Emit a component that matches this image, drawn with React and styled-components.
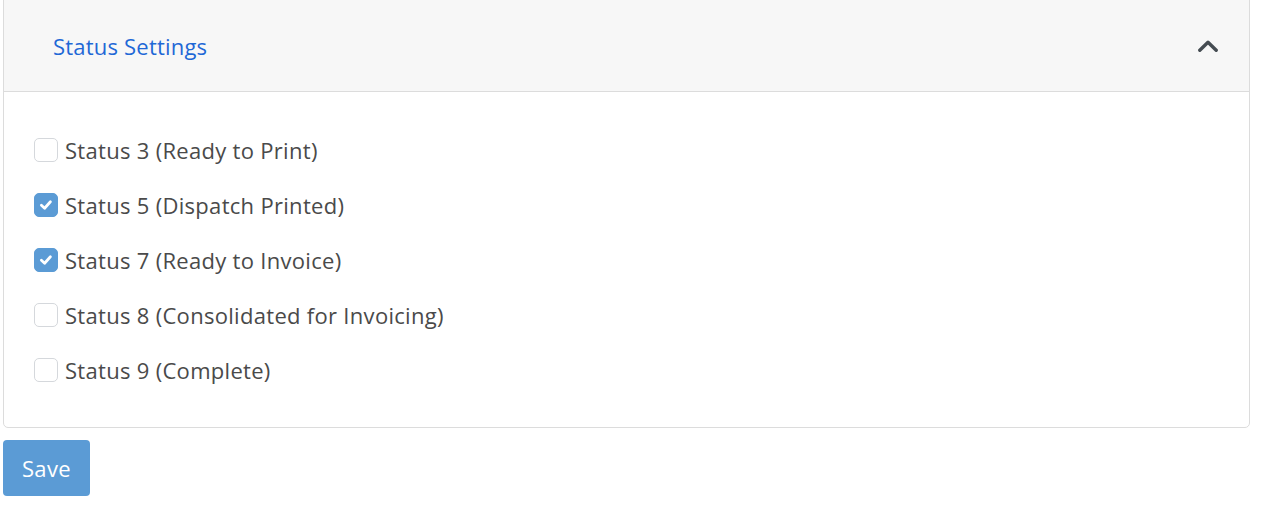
import React, { useState } from 'react';
import styled, { createGlobalStyle } from 'styled-components';

const GlobalStyle = createGlobalStyle`
  body {
    margin: 0;
    background: #fff;
    font-family: "Open Sans", "Noto Sans", sans-serif;
  }
`;

const Page = styled.div`
  padding: 0 13px 0 3px;
`;

const Card = styled.div`
  margin-top: -1px;
  border: 1px solid #dcdcdc;
  border-radius: 0 0 5px 5px;
  background: #fff;
`;

const Header = styled.div`
  display: flex;
  align-items: center;
  justify-content: space-between;
  height: 92px;
  padding: 0 31px 0 49px;
  background: #f7f7f7;
  border-bottom: 1px solid #dcdcdc;
  box-sizing: border-box;
`;

const Title = styled.span`
  color: #1f68d6;
  font-size: 22px;
  letter-spacing: 0.2px;
  margin-top: 1px;
`;

const Body = styled.div`
  display: flex;
  flex-direction: column;
  gap: 31px;
  padding: 46px 30px 45px;
`;

const Row = styled.label`
  display: flex;
  align-items: center;
  gap: 7px;
  height: 24px;
  cursor: pointer;
  color: #4a4a4a;
  font-size: 22px;
  letter-spacing: 0.3px;
`;

const Box = styled.span`
  flex: none;
  width: 24px;
  height: 24px;
  box-sizing: border-box;
  border-radius: 5px;
  display: flex;
  align-items: center;
  justify-content: center;
  background: ${p => (p.checked ? '#5b9bd5' : '#fff')};
  border: 1px solid ${p => (p.checked ? '#5b9bd5' : '#d5d8dc')};
`;

const SaveButton = styled.button`
  margin-top: 12px;
  height: 56px;
  padding: 0 19px;
  border: none;
  border-radius: 4px;
  background: #5b9bd5;
  color: #fff;
  font-family: inherit;
  font-size: 22px;
  letter-spacing: 0.3px;
  cursor: pointer;
`;

const statuses = [
  { id: 3, label: 'Status 3 (Ready to Print)', checked: false },
  { id: 5, label: 'Status 5 (Dispatch Printed)', checked: true },
  { id: 7, label: 'Status 7 (Ready to Invoice)', checked: true },
  { id: 8, label: 'Status 8 (Consolidated for Invoicing)', checked: false },
  { id: 9, label: 'Status 9 (Complete)', checked: false },
];

const Check = () => (
  <svg width="16" height="16" viewBox="0 0 16 16">
    <path d="M3.4 8.3 L6.6 11.2 L12.4 4.8" fill="none" stroke="#fff" strokeWidth="2.8" strokeLinecap="round" strokeLinejoin="round" />
  </svg>
);

const Chevron = () => (
  <svg width="20" height="14" viewBox="0 0 20 14">
    <path d="M1.8 11.2 L10 3.2 L18.2 11.2" fill="none" stroke="#454c52" strokeWidth="3.4" strokeLinecap="round" strokeLinejoin="round" />
  </svg>
);

export default function App() {
  const [items, setItems] = useState(statuses);

  const toggle = id => {
    setItems(list => list.map(item => (item.id === id ? { ...item, checked: !item.checked } : item)));
  };

  return (
    <Page>
      <GlobalStyle />
      <Card>
        <Header>
          <Title>Status Settings</Title>
          <Chevron />
        </Header>
        <Body>
          {items.map(item => (
            <Row key={item.id} onClick={() => toggle(item.id)}>
              <Box checked={item.checked}>{item.checked && <Check />}</Box>
              {item.label}
            </Row>
          ))}
        </Body>
      </Card>
      <SaveButton>Save</SaveButton>
    </Page>
  );
}
